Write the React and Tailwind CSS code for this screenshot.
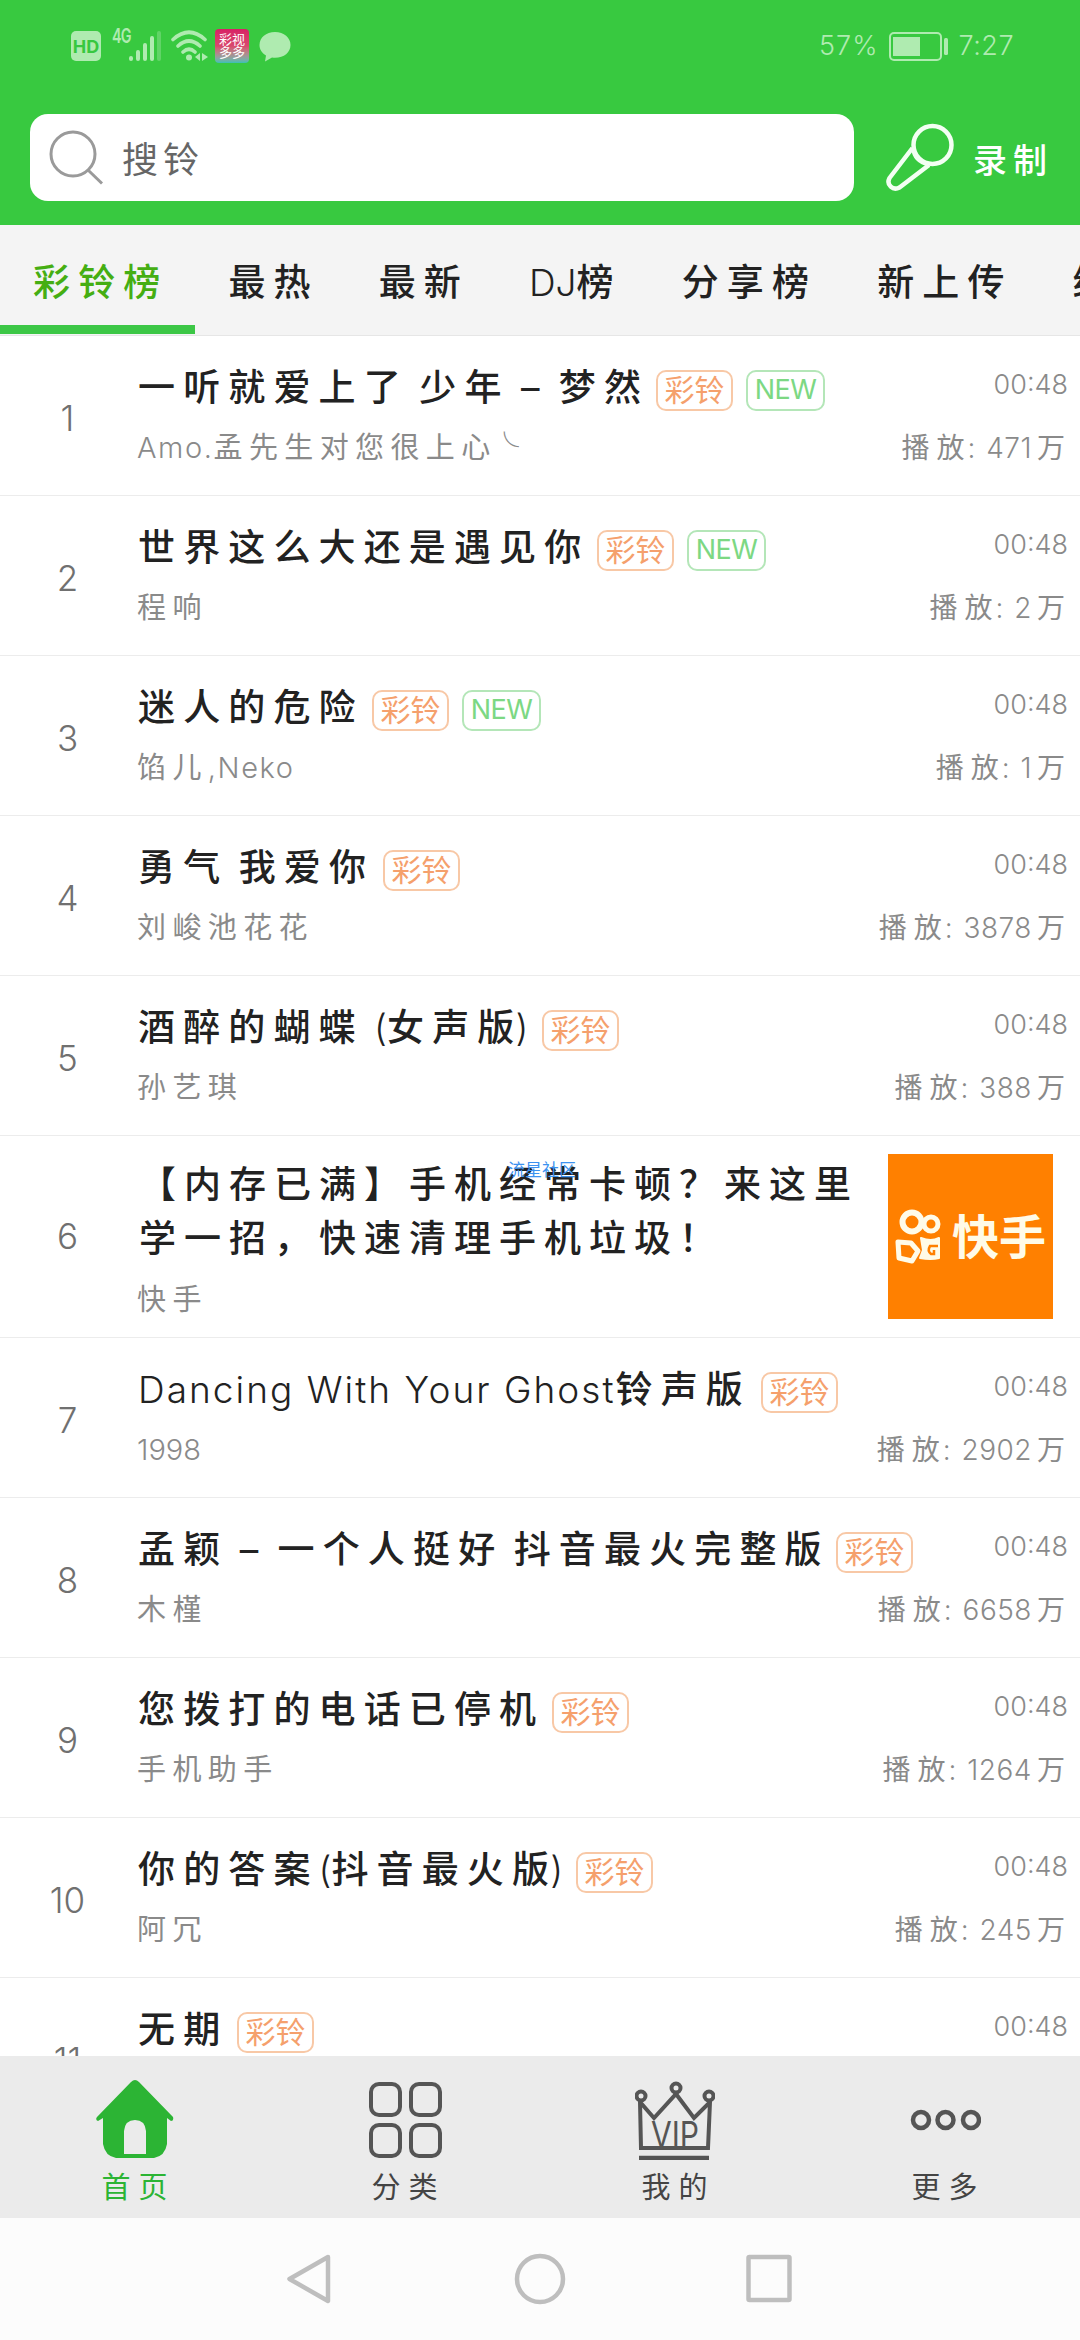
import React, { useState } from 'react';

const songs = [
  { id: 1, title: '一听就爱上了 少年 – 梦然', singer: 'Amo.孟先生对您很上心╰', plays: '471', isNew: true, width: 'w-[509px]' },
  { id: 2, title: '世界这么大还是遇见你', singer: '程响', plays: '2', isNew: true, width: 'w-[450px]' },
  { id: 3, title: '迷人的危险', singer: '馅儿,Neko', plays: '1', isNew: true, width: 'w-[225px]' },
  { id: 4, title: '勇气 我爱你', singer: '刘峻池花花', plays: '3878', width: 'w-[236px]' },
  { id: 5, title: '酒醉的蝴蝶 (女声版)', singer: '孙艺琪', plays: '388', width: 'w-[395px]' },
  { id: 6, title: '【内存已满】手机经常卡顿？来这里学一招，快速清理手机垃圾！', singer: '快手', ad: true },
  { id: 7, title: 'Dancing With Your Ghost铃声版', singer: '1998', plays: '2902', width: 'w-[614px]' },
  { id: 8, title: '孟颖 – 一个人挺好 抖音最火完整版', singer: '木槿', plays: '6658', width: 'w-[689px]' },
  { id: 9, title: '您拨打的电话已停机', singer: '手机助手', plays: '1264', width: 'w-[405px]' },
  { id: 10, title: '你的答案(抖音最火版)', singer: '阿冗', plays: '245', width: 'w-[429px]' },
  { id: 11, title: '无期', singer: '', plays: '', width: 'w-[90px]' },
];

const tabs = ['彩铃榜', '最热', '最新', 'DJ榜', '分享榜', '新上传', '综艺'];

// Chinese runs are set wider than the latin ones
function Mixed({ text }) {
  return text
    .split(/([\u3000-\u9fff\uff00-\uffef]+)/)
    .filter(Boolean)
    .map((part, i) => {
      if (/[\u3000-\u9fff\uff00-\uffef]/.test(part)) {
        return <span key={i} className="tracking-[0.22em]">{part}</span>;
      }
      if (part.trim() === '–') {
        return <span key={i} className="pl-[1px] pr-[9px] font-normal">{part}</span>;
      }
      if (part === ')' || part === '╰') {
        return <span key={i} className="-ml-[7px] font-light">{part}</span>;
      }
      // long latin words are spread a little, brackets and single spaces are not
      return (
        <span key={i} className={/[a-zA-Z]{3}/.test(part) ? 'font-light tracking-[0.055em]' : 'font-light'}>
          {part}
        </span>
      );
    });
}

function StatusBar() {
  return (
    <div className="h-[92px] pl-[71px] pr-[66px] flex items-center justify-between text-[#afebb0]">
      <div className="flex items-center">
        <div className="w-[30px] h-[30px] rounded-[5px] bg-[#afebb0] text-[#37c840] text-[18px] font-bold flex items-center justify-center">HD</div>
        <div className="ml-[11px] w-[50px] h-8 relative">
          <span className="absolute left-0 top-[-2px] text-[20px] leading-[17px] font-semibold tracking-[-1px] scale-x-72 origin-left">4G</span>
          <svg className="absolute left-[17px] top-0" width="33" height="32" viewBox="0 0 33 32" stroke="currentColor" strokeWidth="4" strokeLinecap="round">
            <path d="M2 28v1M9 22v7M16 15v14M23 8v21" />
            <path d="M30 3v26" opacity="0.35" />
          </svg>
        </div>
        <svg className="ml-[9px]" width="38" height="32" viewBox="0 0 38 32" fill="none" stroke="currentColor" strokeWidth="3.6" strokeLinecap="round">
          <path d="M2 9.500Q18 -5 34 9.500M7 16Q18 6 29 16M12 22Q18 16.500 24 22" />
          <circle cx="18" cy="27.500" r="3" fill="currentColor" stroke="none" />
          <path d="M29 23v8l-5-4zM31 23v8l6-4z" fill="currentColor" stroke="none" />
        </svg>
        <div className="ml-[6px] w-[34px] h-[34px] rounded-[4px] bg-gradient-to-b from-[#d81f66] via-[#d9486d] to-[#35c0b5] text-white text-[13px] leading-[13px] text-center pt-1">
          彩视<br />多多
        </div>
        <svg className="ml-[10px]" width="32" height="31" viewBox="0 0 32 31" fill="currentColor">
          <path d="M16 1C7 1 .5 6.500 .5 14c0 4.500 2.500 8 6.500 10.500L6 30.500l7-4c1 .2 2 .3 3 .3 9 0 15.500-5.500 15.500-12.800S25 1 16 1z" />
        </svg>
      </div>
      <div className="flex items-center text-[27px] font-light">
        <span className="tracking-[1px]">57%</span>
        <svg className="mx-[10px]" width="60" height="29" viewBox="0 0 60 29">
          <rect x="1" y="1" width="51" height="27" rx="4" fill="none" stroke="currentColor" strokeWidth="2" />
          <rect x="4" y="5" width="27" height="19" fill="currentColor" />
          <rect x="55" y="6" width="4" height="17" rx="1.500" fill="currentColor" />
        </svg>
        <span className="tracking-[0.5px]">7:27</span>
      </div>
    </div>
  );
}

function Header() {
  return (
    <div className="h-[133px] pl-[30px] pr-[26px] pt-[22px] flex items-start">
      <div className="w-[824px] h-[87px] bg-white rounded-[18px] pl-[19px] flex items-center">
        <svg width="55" height="55" viewBox="0 0 55 55" fill="none" stroke="#9a9a9a" strokeWidth="3">
          <circle cx="24" cy="24" r="22" />
          <path d="M39 40L53 53.500" />
        </svg>
        <span className="ml-[18px] pt-[5px] text-[36px] tracking-[5px] text-[#666]">搜铃</span>
      </div>
      <svg className="ml-[31px] mt-[8px]" width="70" height="70" viewBox="0 0 70 70" fill="none" stroke="#f3fff3" strokeWidth="4.500" strokeLinejoin="round">
        <circle cx="47.500" cy="23" r="19" />
        <path d="M27.500 26L4.500 56C1 63 8 69 14.500 65.500L44 43" />
        <path d="M27.500 26Q29 40 44 43" strokeWidth="3" />
      </svg>
      <span className="ml-[18px] mt-[21px] text-[34px] leading-[52px] tracking-[6px] text-white font-medium whitespace-nowrap">录制</span>
    </div>
  );
}

function Badge({ children, className }) {
  return (
    <span className={`h-[41px] rounded-[10px] border-2 flex items-center justify-center shrink-0 ${className}`}>
      {children}
    </span>
  );
}

function KuaishouLogo() {
  return (
    <div className="w-[165px] h-[165px] bg-[#ff8000] flex items-center pl-[6px] shrink-0">
      <svg width="48" height="56" viewBox="0 0 48 56" fill="none" stroke="#fffbe8">
        <circle cx="18" cy="13" r="9.500" strokeWidth="6" />
        <circle cx="37" cy="15" r="7" strokeWidth="5" />
        <path d="M4 33L17 34L24 42L18 52L5 49Z" strokeWidth="5" strokeLinejoin="round" />
        <path d="M27 29Q37 33 45 29V49Q37 51 26 49L29 41Z" fill="#fffbe8" strokeWidth="2" strokeLinejoin="round" />
        <path d="M44 37H36Q33 42 37 45H40V41" stroke="#ff8000" strokeWidth="2.500" />
      </svg>
      <span className="ml-[10px] text-[47px] leading-none font-bold text-[#fffbe8]">快手</span>
    </div>
  );
}

function SongRow({ song }) {
  return (
    <div className="h-[160px] border-b border-[#ececec] flex">
      <div className="w-[135px] shrink-0 pt-[60px] text-[35px] leading-[44px] font-light text-center text-[#707070]">{song.id}</div>
      <div className="flex-1 min-w-0 pt-[22px]">
        <div className="h-[56px] flex items-center">
          <div className={`shrink-0 pl-[3px] pt-[3px] text-[37px] leading-[56px] font-medium text-[#222] whitespace-pre ${song.width}`}>
            <Mixed text={song.title} />
          </div>
          <Badge className="ml-3 mt-[9px] w-[77px] border-[#f8c8a6] text-[#f5a06c] text-[30px]">彩铃</Badge>
          {song.isNew && (
            <Badge className="ml-[13px] mt-[9px] w-[79px] border-[#b4e6b8] text-[#7cd883] text-[27px] tracking-[-0.5px]">NEW</Badge>
          )}
        </div>
        <div className="mt-[12px] pl-[2px] text-[29px] leading-[44px] text-[#8a8a8a] whitespace-nowrap">
          <Mixed text={song.singer} />
        </div>
      </div>
      <div className="pt-[27px] text-right text-[#8a8a8a] whitespace-pre">
        <div className="pr-[12px] text-[27px] leading-[44px] font-light">00:48</div>
        {song.plays && (
          <div className="mt-[19px] pr-[13px] text-[28px] leading-[44px]">
            <span className="tracking-[7px]">播放</span>
            <span className="-ml-[4px] mr-[3px] font-light">: </span>
            <span className="font-light tracking-[0.5px] mr-[5px]">{song.plays}</span>
            <span className="tracking-[2px]">万</span>
          </div>
        )}
      </div>
    </div>
  );
}

function AdRow({ song }) {
  return (
    <div className="relative h-[202px] border-b border-[#ececec] flex">
      <div className="w-[135px] pt-[78px] text-[35px] leading-[44px] font-light text-center text-[#707070]">{song.id}</div>
      <div className="w-[753px] pt-[22px]">
        <div className="w-[735px] pl-[4px] text-[37px] leading-[54px] font-medium tracking-[8px] text-[#222] break-all">{song.title}</div>
        <div className="mt-[12px] pl-[2px] text-[29px] leading-[44px] text-[#8a8a8a]">
          <Mixed text={song.singer} />
        </div>
      </div>
      <div className="pt-[18px]">
        <KuaishouLogo />
      </div>
      <span className="absolute left-[508px] top-[22px] text-[17px] leading-[24px] text-[#3c92f0]">流星社区</span>
    </div>
  );
}

function HomeIcon() {
  return (
    <svg width="78" height="78" viewBox="0 0 78 78" fill="#2cb434">
      <path d="M35 2Q39-2 43 2L77 37Q78 41 75 41L71 38V64Q69 76 58 78H20Q9 76 7 64V38L2 41Q-1 40 1 37Z" />
      <path d="M28 74V51Q29 40 39 40T50 51V74Z" fill="#ebebeb" />
    </svg>
  );
}

function GridIcon() {
  return (
    <svg width="73" height="78" viewBox="0 0 73 78" fill="none" stroke="#555" strokeWidth="4">
      <rect x="2" y="4" width="29" height="31" rx="8" />
      <rect x="42" y="4" width="29" height="31" rx="8" />
      <rect x="2" y="45" width="29" height="31" rx="8" />
      <rect x="42" y="45" width="29" height="31" rx="8" />
    </svg>
  );
}

function CrownIcon() {
  return (
    <svg width="80" height="80" viewBox="0 0 80 80" fill="none" stroke="#555" strokeWidth="4">
      <circle cx="6" cy="16" r="4.500" />
      <circle cx="41" cy="8" r="4.500" />
      <circle cx="74" cy="16" r="4.500" />
      <path d="M5 22L6 68H73L75 22L59 38L41 14L19 38Z" />
      <path d="M4 78H74" strokeWidth="4.500" />
      <text x="16" y="67" fontSize="36" fill="#555" stroke="none" textLength="48" lengthAdjust="spacingAndGlyphs">VIP</text>
    </svg>
  );
}

function DotsIcon() {
  return (
    <svg width="72" height="78" viewBox="0 0 72 78" fill="none" stroke="#555" strokeWidth="4.500">
      <circle cx="12" cy="40" r="8" />
      <circle cx="36.500" cy="40" r="8" />
      <circle cx="62" cy="40" r="8" />
    </svg>
  );
}

const navItems = [
  { label: '首页', icon: HomeIcon },
  { label: '分类', icon: GridIcon },
  { label: '我的', icon: CrownIcon },
  { label: '更多', icon: DotsIcon },
];

export default function App() {
  const [activeTab, setActiveTab] = useState(0);
  const [activeNav, setActiveNav] = useState(0);

  return (
    <div className="w-[1080px] h-[2340px] overflow-hidden flex flex-col bg-white font-['Inter','Noto_Sans_CJK_SC',sans-serif]">
      {/* Green top area */}
      <div className="bg-[#38c940] shrink-0">
        <StatusBar />
        <Header />
      </div>

      {/* Tabs */}
      <div className="h-[111px] shrink-0 bg-[#f4f4f4] border-b border-[#e6e6e6] flex overflow-hidden">
        {tabs.map((tab, i) => (
          <button
            key={tab}
            onClick={() => setActiveTab(i)}
            className={`h-[109px] shrink-0 pl-[33px] pr-[27px] pt-[15px] text-[37px] font-medium whitespace-nowrap border-b-[9px] ${
              i === activeTab ? 'text-[#45ae12] border-[#3cc746]' : 'text-[#222] border-transparent'
            }`}
          >
            <Mixed text={tab} />
          </button>
        ))}
      </div>

      {/* Song list */}
      <div className="flex-1 min-h-0 overflow-hidden">
        {songs.map((song) => (song.ad ? <AdRow key={song.id} song={song} /> : <SongRow key={song.id} song={song} />))}
      </div>

      {/* Bottom navigation */}
      <div className="h-[162px] shrink-0 bg-[#ebebeb] grid grid-cols-4">
        {navItems.map(({ label, icon: Icon }, i) => (
          <button key={label} onClick={() => setActiveNav(i)} className="flex flex-col items-center pt-6">
            <div className="h-[80px]"><Icon /></div>
            <span className={`mt-[6px] pl-[7px] text-[29px] leading-[44px] tracking-[8px] ${i === activeNav ? 'text-[#2cb434]' : 'text-[#444]'}`}>
              {label}
            </span>
          </button>
        ))}
      </div>

      {/* Android keys */}
      <div className="h-[122px] shrink-0 bg-[#fcfcfc]">
        <svg width="1080" height="122" viewBox="0 0 1080 122" fill="none" stroke="#bebebe" strokeWidth="4.500" strokeLinejoin="round">
          <path d="M328 39L289.500 61L328 83Z" />
          <circle cx="540" cy="61" r="23" />
          <rect x="748.500" y="39" width="41" height="43" rx="1" />
        </svg>
      </div>
    </div>
  );
}
